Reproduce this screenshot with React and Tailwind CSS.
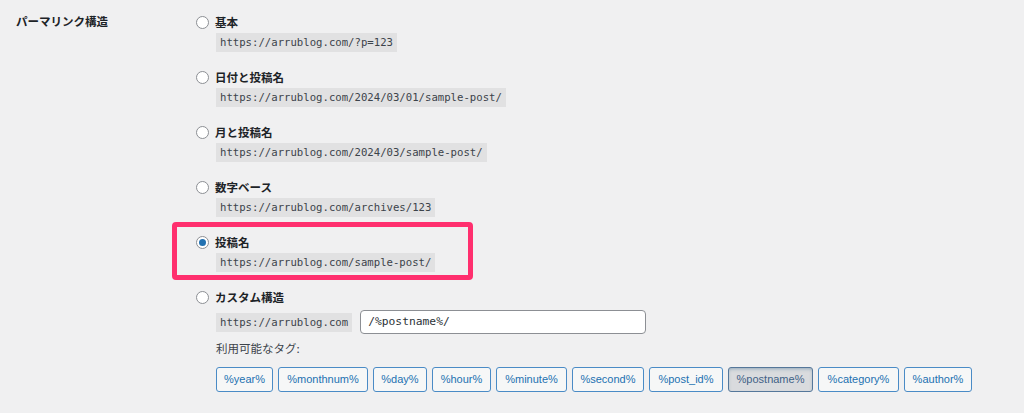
import React from "react";

const cjk = "font-['Noto_Sans_CJK_JP','Noto_Sans',sans-serif]";
const mono = "font-['DejaVu_Sans_Mono','Liberation_Mono',monospace]";

const options = [
  { label: "基本", url: "https://arrublog.com/?p=123" },
  { label: "日付と投稿名", url: "https://arrublog.com/2024/03/01/sample-post/" },
  { label: "月と投稿名", url: "https://arrublog.com/2024/03/sample-post/" },
  { label: "数字ベース", url: "https://arrublog.com/archives/123" },
  { label: "投稿名", url: "https://arrublog.com/sample-post/", checked: true },
];

const tags = [
  { t: "%year%", w: "w-[57px]" },
  { t: "%monthnum%", w: "w-[90px]" },
  { t: "%day%", w: "w-[54px]" },
  { t: "%hour%", w: "w-[59px]" },
  { t: "%minute%", w: "w-[71px]" },
  { t: "%second%", w: "w-[72px]" },
  { t: "%post_id%", w: "w-[74px]" },
  { t: "%postname%", w: "w-[85px]", active: true },
  { t: "%category%", w: "w-[81px]" },
  { t: "%author%", w: "w-[68px]" },
];

function Radio({ checked }) {
  return (
    <span className="flex h-[13px] w-[13px] shrink-0 items-center justify-center rounded-full border border-[#8c8f94] bg-white">
      {checked && <span className="h-[7px] w-[7px] rounded-full bg-[#2271b1]" />}
    </span>
  );
}

function Code({ children }) {
  return (
    <span className={`block h-[19px] bg-[#e1e1e2] px-[4px] text-[10.65px] leading-[19px] text-[#3c434a] ${mono}`}>
      {children}
    </span>
  );
}

export default function App() {
  return (
    <div className={`relative min-h-[413px] w-[1024px] overflow-hidden bg-[#f0f0f1] text-[#1d2327] ${cjk}`}>
      <div className="flex pl-[16px] pt-[14px]">
        <div className="w-[180px] text-[11.5px] font-bold leading-[14px]">パーマリンク構造</div>
        <div className="flex flex-col">
          {options.map((o) => (
            <div key={o.label} className="mb-[17px] flex flex-col">
              <label className="flex h-[16px] items-center gap-[6px]">
                <Radio checked={o.checked} />
                <span className="text-[11.5px] font-bold leading-[16px]">{o.label}</span>
              </label>
              <div className="mt-[3px] flex pl-[20px]">
                <Code>{o.url}</Code>
              </div>
            </div>
          ))}
          <div className="flex flex-col">
            <label className="flex h-[16px] items-center gap-[6px]">
              <Radio />
              <span className="text-[11.5px] font-bold leading-[16px]">カスタム構造</span>
            </label>
            <div className="mt-[5px] flex items-center gap-[8px] pl-[20px]">
              <Code>https://arrublog.com</Code>
              <div className={`flex h-[24px] w-[286px] items-center rounded-[4px] border border-[#8c8f94] bg-white pl-[7px] text-[11.3px] text-[#2c3338] ${mono}`}>
                /%postname%/
              </div>
            </div>
            <div className="mt-[6px] pl-[20px] text-[11.5px] leading-[16px] text-[#3c434a]">利用可能なタグ:</div>
            <div className="mt-[11px] flex gap-[5px] pl-[20px]">
              {tags.map((tg) => (
                <span
                  key={tg.t}
                  className={
                    tg.active
                      ? `flex h-[25px] ${tg.w} items-center justify-center rounded-[3px] border border-[#55779a] bg-[#d9dbde] text-[11px] text-[#3f6186] shadow-[inset_0_2px_4px_-2px_rgba(10,75,120,0.5)] font-['Liberation_Sans',Arial,sans-serif]`
                      : `flex h-[25px] ${tg.w} items-center justify-center rounded-[3px] border border-[#4a8bc6] bg-[#f6f7f7] text-[11px] text-[#2271b1] font-['Liberation_Sans',Arial,sans-serif]`
                  }
                >
                  {tg.t}
                </span>
              ))}
            </div>
          </div>
        </div>
      </div>
      <div className="pointer-events-none absolute left-[172px] top-[222px] h-[58px] w-[301px] rounded-[4px] border-[5px] border-[#ff2f6e]" />
    </div>
  );
}
